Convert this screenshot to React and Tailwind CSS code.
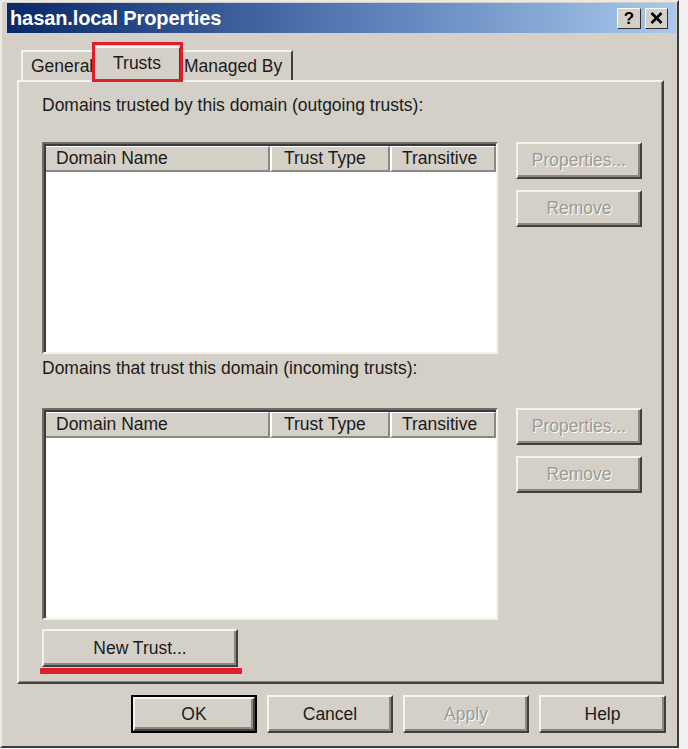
const btn3d =
  "flex items-center justify-center bg-[#d4d0c8] border-2 border-t-[#f4f3ef] border-l-[#f4f3ef] border-r-[#404040] border-b-[#404040] shadow-[inset_-2px_-2px_0_#8a8883]";

function WinButton({ children, disabled, className = "" }) {
  return (
    <div className={`${btn3d} ${className}`}>
      <span
        className={
          disabled
            ? "text-[#9c9a95] [text-shadow:1px_1px_0_#ffffff]"
            : "text-[#1b1b1b]"
        }
      >
        {children}
      </span>
    </div>
  );
}

function TrustList() {
  return (
    <div className="w-[456px] h-[212px] bg-white border-2 border-t-[#6e6c68] border-l-[#6e6c68] border-r-[#f2f1ed] border-b-[#f2f1ed] shadow-[inset_2px_2px_0_#3a3a3a]">
      <div className="flex h-[28px] pt-[2px] pl-[2px]">
        <div className="w-[224px] flex items-center pl-[10px] bg-[#d4d0c8] border-r-2 border-b-2 border-r-[#8a8883] border-b-[#8a8883] border-t border-t-white">
          Domain Name
        </div>
        <div className="w-[120px] flex items-center pl-[12px] bg-[#d4d0c8] border-r-2 border-b-2 border-l-2 border-l-white border-r-[#8a8883] border-b-[#8a8883] border-t border-t-white">
          Trust Type
        </div>
        <div className="flex-1 flex items-center pl-[10px] bg-[#d4d0c8] border-r-2 border-b-2 border-l-2 border-l-white border-r-[#8a8883] border-b-[#8a8883] border-t border-t-white">
          Transitive
        </div>
      </div>
    </div>
  );
}

function ListSection({ label, gapTop }) {
  return (
    <>
      <div className="h-[22px] leading-[22px]">{label}</div>
      <div className={`flex gap-[18px] ${gapTop}`}>
        <TrustList />
        <div className="flex flex-col gap-[11px]">
          <WinButton disabled className="w-[126px] h-[37px]">
            Properties...
          </WinButton>
          <WinButton disabled className="w-[126px] h-[37px]">
            Remove
          </WinButton>
        </div>
      </div>
    </>
  );
}

export default function App() {
  return (
    <div className="w-[688px] h-[749px] bg-[#f1f1f1] font-['Liberation_Sans',Arial,sans-serif] text-[17.5px] text-[#1b1b1b] overflow-hidden">
      <div className="w-[679px] h-[748px] bg-[#d4d0c8] border-2 border-t-[#ebe9e3] border-l-[#ebe9e3] border-r-[#3c3c3c] border-b-[#3c3c3c] pt-[1px] pl-[5px] pr-[1px] flex flex-col">
        {/* title bar */}
        <div className="h-[30px] flex items-center justify-between pl-[3px] pr-[8px] bg-gradient-to-r from-[#0a2868] via-[#5479b3] to-[#a9c9ec]">
          <span className="text-white font-bold text-[20px] tracking-[-0.1px]">hasan.local Properties</span>
          <div className="flex gap-[4px]">
            <div className="w-[24px] h-[21px] flex items-center justify-center bg-[#d4d0c8] border border-t-white border-l-white border-r-[#303030] border-b-[#303030] font-bold text-[17px] text-black leading-none">
              ?
            </div>
            <div className="w-[23px] h-[21px] flex items-center justify-center bg-[#d4d0c8] border border-t-white border-l-white border-r-[#303030] border-b-[#303030]">
              <svg width="13" height="12" viewBox="0 0 13 12">
                <path d="M1.5 1 L11.5 11 M11.5 1 L1.5 11" stroke="#000" strokeWidth="2.6" />
              </svg>
            </div>
          </div>
        </div>

        {/* tabs */}
        <div className="mt-[13px] pl-[14px] flex items-end h-[34px]">
          <div className="w-[72px] h-[30px] flex items-center pl-[8px] border-t-2 border-l-2 border-t-[#f4f3ef] border-l-[#f4f3ef] rounded-tl-[2px]">
            General
          </div>
          <div className="relative z-10 -mb-[2px] w-[88px] h-[36px] flex items-center justify-center bg-[#d4d0c8] border-t-2 border-l-2 border-r-2 border-t-[#f4f3ef] border-l-[#f4f3ef] border-r-[#404040] pb-[4px]">
            Trusts
            <span className="absolute -left-[3px] -top-[6px] w-[91px] h-[40px] border-[3px] border-[#dc1f2a]" />
          </div>
          <div className="w-[112px] h-[30px] flex items-center pl-[3px] border-t-2 border-r-2 border-t-[#f4f3ef] border-r-[#404040]">
            Managed By
          </div>
        </div>

        {/* tab panel */}
        <div className="ml-[10px] w-[647px] h-[604px] border-2 border-t-[#f4f3ef] border-l-[#f4f3ef] border-r-[#404040] border-b-[#404040] shadow-[inset_-1px_-1px_0_#8a8883] pl-[23px] pt-[12px] flex flex-col">
          <ListSection label="Domains trusted by this domain (outgoing trusts):" gapTop="mt-[26px]" />
          <div className="mt-[3px]" />
          <ListSection label="Domains that trust this domain (incoming trusts):" gapTop="mt-[29px]" />
          <div className="mt-[9px] w-[202px]">
            <WinButton className="w-[196px] h-[38px]">New Trust...</WinButton>
            <div className="mt-[1px] -ml-[2px] w-[202px] h-[6px] bg-[#e01f2b] rounded-[1px]" />
          </div>
        </div>

        {/* dialog buttons */}
        <div className="mt-[11px] flex gap-[10px] pl-[124px]">
          <div className="w-[126px] h-[38px] border-2 border-black">
            <div className={`${btn3d} w-full h-full`}>OK</div>
          </div>
          <WinButton className="w-[126px] h-[38px]">Cancel</WinButton>
          <WinButton disabled className="w-[126px] h-[38px]">
            Apply
          </WinButton>
          <WinButton className="w-[127px] h-[38px]">Help</WinButton>
        </div>
      </div>
    </div>
  );
}
